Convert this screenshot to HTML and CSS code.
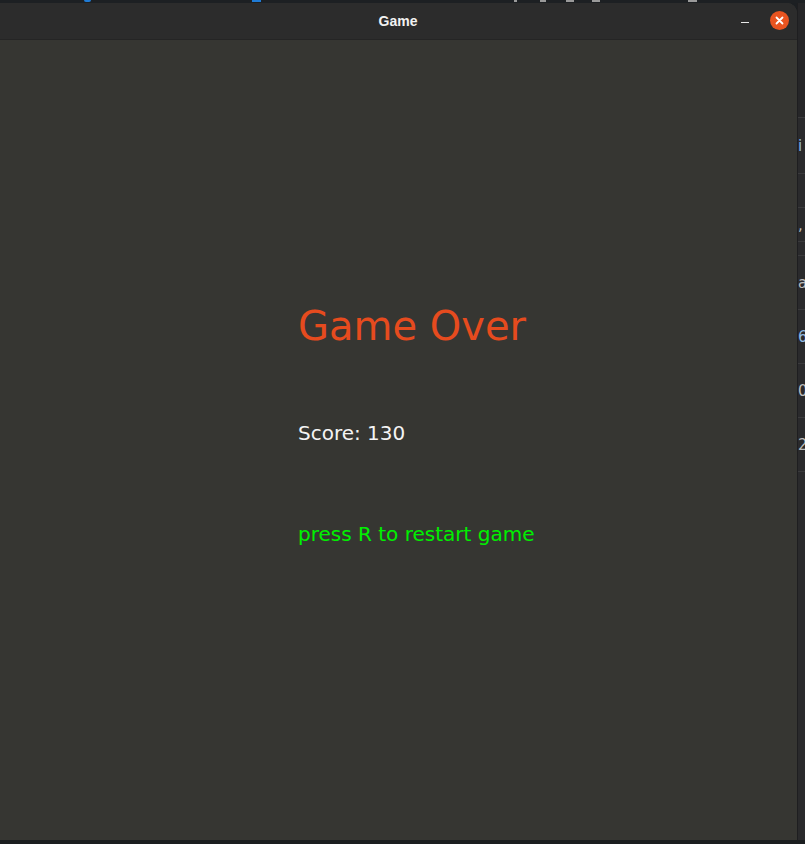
FILE: index.html
```html
<!DOCTYPE html>
<html>
<head>
<meta charset="utf-8">
<link rel="stylesheet" href="styles.css">
</head>
<body>
<div class="screen">
  <div class="panel-strip">
    <span class="bit bit-blue b1"></span>
    <span class="bit bit-blue b2"></span>
    <span class="bit bit-grey b3"></span>
    <span class="bit bit-grey b4"></span>
    <span class="bit bit-grey b5"></span>
    <span class="bit bit-grey b6"></span>
    <span class="bit bit-grey b7"></span>
  </div>
  <div class="desk">
    <div class="window">
      <div class="titlebar">
        <div class="title">Game</div>
        <div class="controls">
          <span class="minimize"></span>
          <span class="close">
            <svg width="19" height="19" viewBox="0 0 19 19"><path d="M6.5 6.5 L12.5 12.5 M12.5 6.5 L6.5 12.5" stroke="#fff" stroke-width="1.8" stroke-linecap="round"/></svg>
          </span>
        </div>
      </div>
      <div class="content">
        <div class="message">
          <div class="game-over">Game Over</div>
          <div class="score">Score: 130</div>
          <div class="restart">press R to restart game</div>
        </div>
      </div>
    </div>
    <div class="side">
      <div class="side-row r0"></div>
      <div class="side-row r1"><span class="t blue">i</span></div>
      <div class="side-row r2"></div>
      <div class="side-row r3"><span class="t">,</span></div>
      <div class="side-row r4"></div>
      <div class="side-row r5"><span class="t">a</span></div>
      <div class="side-row r5"><span class="t blue">6</span></div>
      <div class="side-row r5"><span class="t">0</span></div>
      <div class="side-row r5"><span class="t">2(</span></div>
      <div class="side-row rest"></div>
    </div>
  </div>
  <div class="bottom-strip"></div>
</div>
</body>
</html>
```

FILE: styles.css
```css
html, body {
  margin: 0;
  padding: 0;
  background: #1c1f22;
  overflow: hidden;
}

.screen {
  width: 805px;
  height: 844px;
  display: flex;
  flex-direction: column;
  background: #1c1f22;
}

.panel-strip {
  height: 3px;
  flex: none;
  position: relative;
  background: #1d2023;
}

.bit {
  position: absolute;
  top: 0;
  height: 2px;
}
.bit-blue { background: #1f7bd6; }
.bit-grey { background: #9a9a9a; }
.b1 { left: 84px; width: 7px; border-radius: 0 0 4px 4px; }
.b2 { left: 252px; width: 9px; }
.b3 { left: 514px; width: 3px; }
.b4 { left: 540px; width: 6px; }
.b5 { left: 566px; width: 8px; }
.b6 { left: 592px; width: 8px; }
.b7 { left: 688px; width: 9px; }

.desk {
  flex: 1;
  display: flex;
  background: #1c1f22;
}

.window {
  width: 797px;
  flex: none;
  display: flex;
  flex-direction: column;
  border-top-right-radius: 10px;
  overflow: hidden;
  background: #363632;
}

.titlebar {
  height: 36px;
  flex: none;
  background: #2c2c2c;
  border-bottom: 1px solid #252525;
  display: flex;
  align-items: center;
  justify-content: center;
  position: relative;
}

.title {
  font-family: "Liberation Sans", Arial, sans-serif;
  font-weight: bold;
  font-size: 14px;
  color: #f2f2f2;
  padding-right: 1px;
}

.controls {
  position: absolute;
  right: 8px;
  top: 8px;
  display: flex;
  align-items: center;
  gap: 21px;
}

.minimize {
  display: block;
  width: 8px;
  height: 1.5px;
  background: #e8e8e8;
  margin-top: 4px;
}

.close {
  display: block;
  width: 19px;
  height: 19px;
  border-radius: 50%;
  background: #e95420;
}
.close svg { display: block; }

.content {
  flex: 1;
  background: #363632;
  padding-left: 298px;
  padding-top: 262px;
}

.message {
  font-family: "DejaVu Sans", "Noto Sans", sans-serif;
}

.game-over {
  font-size: 40px;
  line-height: 48px;
  color: #e64b1e;
}

.score {
  margin-top: 71px;
  font-size: 20px;
  line-height: 24px;
  color: #f4f4f4;
}

.restart {
  margin-top: 77px;
  font-size: 20px;
  line-height: 24px;
  color: #00f000;
}

.side {
  flex: 1;
  display: flex;
  flex-direction: column;
  background: #2a2a2c;
  border-left: 1px solid #1e1e20;
}

.side-row {
  box-sizing: border-box;
  flex: none;
  border-top: 1px solid #3a3a3c;
  display: flex;
  align-items: center;
  font-family: "DejaVu Sans", sans-serif;
  font-size: 15px;
  line-height: 18px;
  color: #bdbdbd;
  overflow: hidden;
  white-space: nowrap;
}
.side-row .t { padding-left: 0; }
.blue { color: #8fb8e0; }
.r0 { height: 114px; border-top: none; background: #262628; }
.r1 { height: 56px; }
.r2 { height: 34px; }
.r3 { height: 34px; }
.r4 { height: 14px; }
.r5 { height: 54px; }
.rest { flex: 1; }

.bottom-strip {
  height: 4px;
  flex: none;
  background: #1b1e20;
}
```
